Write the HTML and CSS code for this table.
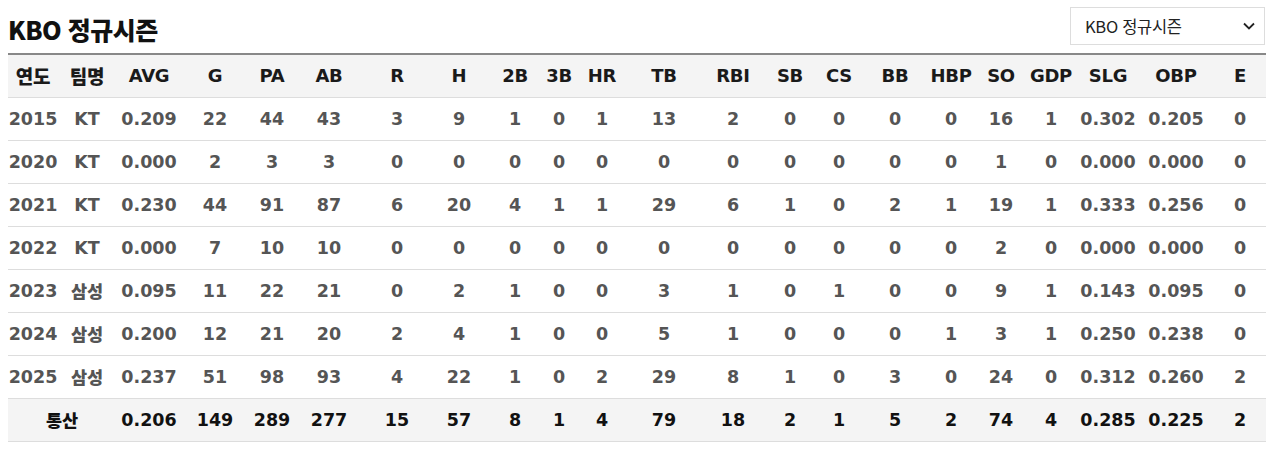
FILE: index.html
```html
<!DOCTYPE html>
<html lang="ko">
<head>
<meta charset="utf-8">
<link rel="stylesheet" href="styles.css">
</head>
<body>
<div class="head">
  <h2 class="title">KBO 정규시즌</h2>
  <div class="select">
    <span>KBO 정규시즌</span>
    <svg width="14" height="14" viewBox="0 0 14 14"><path d="M2 4.5 L7 9.5 L12 4.5" fill="none" stroke="#222" stroke-width="1.8"/></svg>
  </div>
</div>
<table class="stats">
  <colgroup>
    <col style="width:50px"><col style="width:58px"><col style="width:66px"><col style="width:66px"><col style="width:48px"><col style="width:66px"><col style="width:70px"><col style="width:54px"><col style="width:58px"><col style="width:30px"><col style="width:56px"><col style="width:68px"><col style="width:70px"><col style="width:44px"><col style="width:54px"><col style="width:58px"><col style="width:54px"><col style="width:46px"><col style="width:54px"><col style="width:60px"><col style="width:76px"><col style="width:52px">
  </colgroup>
  <thead>
    <tr><th>연도</th><th>팀명</th><th>AVG</th><th>G</th><th>PA</th><th>AB</th><th>R</th><th>H</th><th>2B</th><th>3B</th><th>HR</th><th>TB</th><th>RBI</th><th>SB</th><th>CS</th><th>BB</th><th>HBP</th><th>SO</th><th>GDP</th><th>SLG</th><th>OBP</th><th>E</th></tr>
  </thead>
  <tbody>
    <tr><td>2015</td><td>KT</td><td>0.209</td><td>22</td><td>44</td><td>43</td><td>3</td><td>9</td><td>1</td><td>0</td><td>1</td><td>13</td><td>2</td><td>0</td><td>0</td><td>0</td><td>0</td><td>16</td><td>1</td><td>0.302</td><td>0.205</td><td>0</td></tr>
    <tr><td>2020</td><td>KT</td><td>0.000</td><td>2</td><td>3</td><td>3</td><td>0</td><td>0</td><td>0</td><td>0</td><td>0</td><td>0</td><td>0</td><td>0</td><td>0</td><td>0</td><td>0</td><td>1</td><td>0</td><td>0.000</td><td>0.000</td><td>0</td></tr>
    <tr><td>2021</td><td>KT</td><td>0.230</td><td>44</td><td>91</td><td>87</td><td>6</td><td>20</td><td>4</td><td>1</td><td>1</td><td>29</td><td>6</td><td>1</td><td>0</td><td>2</td><td>1</td><td>19</td><td>1</td><td>0.333</td><td>0.256</td><td>0</td></tr>
    <tr><td>2022</td><td>KT</td><td>0.000</td><td>7</td><td>10</td><td>10</td><td>0</td><td>0</td><td>0</td><td>0</td><td>0</td><td>0</td><td>0</td><td>0</td><td>0</td><td>0</td><td>0</td><td>2</td><td>0</td><td>0.000</td><td>0.000</td><td>0</td></tr>
    <tr><td>2023</td><td>삼성</td><td>0.095</td><td>11</td><td>22</td><td>21</td><td>0</td><td>2</td><td>1</td><td>0</td><td>0</td><td>3</td><td>1</td><td>0</td><td>1</td><td>0</td><td>0</td><td>9</td><td>1</td><td>0.143</td><td>0.095</td><td>0</td></tr>
    <tr><td>2024</td><td>삼성</td><td>0.200</td><td>12</td><td>21</td><td>20</td><td>2</td><td>4</td><td>1</td><td>0</td><td>0</td><td>5</td><td>1</td><td>0</td><td>0</td><td>0</td><td>1</td><td>3</td><td>1</td><td>0.250</td><td>0.238</td><td>0</td></tr>
    <tr><td>2025</td><td>삼성</td><td>0.237</td><td>51</td><td>98</td><td>93</td><td>4</td><td>22</td><td>1</td><td>0</td><td>2</td><td>29</td><td>8</td><td>1</td><td>0</td><td>3</td><td>0</td><td>24</td><td>0</td><td>0.312</td><td>0.260</td><td>2</td></tr>
  </tbody>
  <tfoot>
    <tr><td colspan="2">통산</td><td>0.206</td><td>149</td><td>289</td><td>277</td><td>15</td><td>57</td><td>8</td><td>1</td><td>4</td><td>79</td><td>18</td><td>2</td><td>1</td><td>5</td><td>2</td><td>74</td><td>4</td><td>0.285</td><td>0.225</td><td>2</td></tr>
  </tfoot>
</table>
</body>
</html>
```
FILE: styles.css
```css
* { box-sizing: border-box; }
body {
  margin: 0;
  padding: 7px 6px 0 8px;
  background: #fff;
  font-family: "DejaVu Sans", "Noto Sans CJK KR", sans-serif;
  color: #222;
}
.head {
  display: flex;
  justify-content: space-between;
  align-items: center;
  height: 38px;
  margin-bottom: 8px;
}
.title {
  margin: 0;
  font-family: "Noto Sans CJK KR", sans-serif;
  font-weight: 900;
  font-size: 25px;
  letter-spacing: -0.5px;
  color: #111;
  padding-top: 5px;
}
.select {
  width: 195px;
  height: 38px;
  border: 1px solid #ddd;
  display: flex;
  align-items: center;
  justify-content: space-between;
  padding: 0 8px 0 14px;
  font-family: "Noto Sans CJK KR", sans-serif;
  font-size: 16.5px;
  letter-spacing: -0.3px;
  color: #222;
}
.stats {
  width: 1258px;
  border-collapse: collapse;
  table-layout: fixed;
  border-top: 2px solid #888;
}
.stats th, .stats td {
  height: 43px;
  padding: 0;
  text-align: center;
  white-space: nowrap;
  border-bottom: 1px solid #ddd;
  font-weight: bold;
}
.stats th {
  background: #f4f4f4;
  font-size: 18px;
  color: #1a1a1a;
  letter-spacing: -0.3px;
}
.stats th:nth-child(-n+2) {
  font-family: "Noto Sans CJK KR", sans-serif;
  font-weight: 900;
  font-size: 19px;
}
.stats tbody td {
  font-size: 17.5px;
  color: #555;
}
.stats tbody td:nth-child(2) {
  font-weight: 900;
}
.stats tfoot td {
  background: #f4f4f4;
  font-size: 17.5px;
  color: #111;
}
.stats tfoot td:first-child {
  font-family: "Noto Sans CJK KR", sans-serif;
  font-weight: 900;
}
```
